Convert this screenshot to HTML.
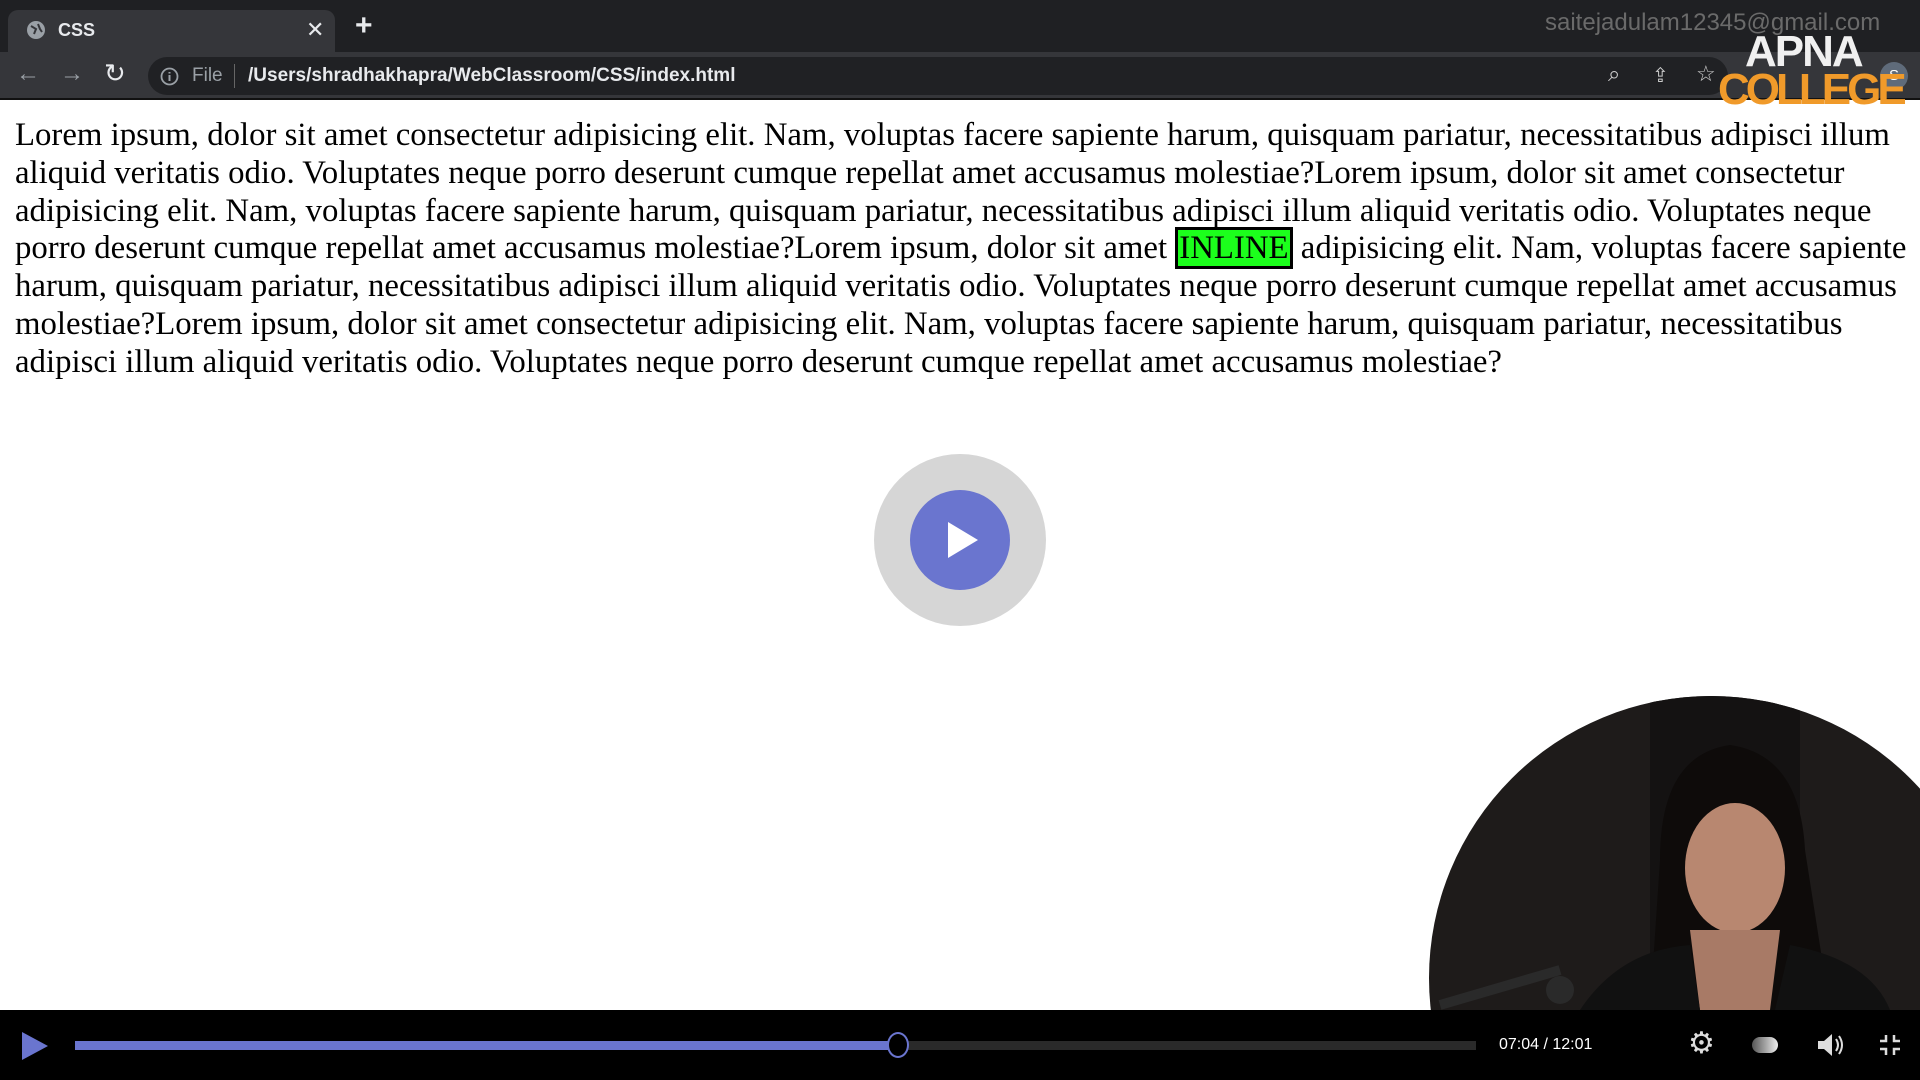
<!DOCTYPE html>
<html><head><style>
*{margin:0;padding:0;box-sizing:border-box}
body{width:1920px;height:1080px;overflow:hidden;background:#fff;position:relative;font-family:"Liberation Sans",sans-serif}
.tabbar{position:absolute;left:0;top:0;width:1920px;height:52px;background:#1f2023}
.tab{position:absolute;left:8px;top:10px;width:327px;height:42px;background:#35363a;border-radius:10px 10px 0 0;color:#e8eaed;font-size:18px}
.toolbar{position:absolute;left:0;top:52px;width:1920px;height:48px;background:#35363a;border-bottom:2px solid #111}
.url{position:absolute;left:148px;top:5px;width:1580px;height:38px;background:#202124;border-radius:19px;color:#e8eaed;font-size:19px}
.text{position:absolute;left:15px;top:117px;font-family:"Liberation Serif",serif;font-size:32.8px;line-height:37.8px;color:#000;white-space:nowrap}
.inl{background:#1cff1c;border:3px solid #000;padding:0 1px}
.ctrl{position:absolute;left:0;top:1010px;width:1920px;height:70px;background:#000}
</style></head><body>
<div class="tabbar">
 <div class="tab">
  <svg style="position:absolute;left:18px;top:10px" width="20" height="20"><circle cx="10" cy="10" r="9" fill="#9aa0a6"/><path d="M5 6 L10 9 L8 14 M12 4 L14 9 L16 12" stroke="#35363a" stroke-width="2" fill="none"/></svg>
  <span style="position:absolute;left:50px;top:10px;font-weight:bold">CSS</span>
  <span style="position:absolute;left:298px;top:7px;font-size:22px">✕</span>
 </div>
 <span style="position:absolute;left:355px;top:8px;color:#e8eaed;font-size:30px;line-height:36px;font-weight:bold">+</span>
 <span style="position:absolute;left:1545px;top:9px;color:#6a6a6a;font-size:24px">saitejadulam12345@gmail.com</span>
</div>
<div class="toolbar">
 <span style="position:absolute;left:16px;top:8px;color:#9aa0a6;font-size:24px">←</span>
 <span style="position:absolute;left:60px;top:8px;color:#9aa0a6;font-size:24px">→</span>
 <span style="position:absolute;left:104px;top:6px;color:#e8eaed;font-size:26px">↻</span>
 <div class="url">
  <svg style="position:absolute;left:12px;top:10px" width="19" height="19"><circle cx="9.5" cy="9.5" r="8" stroke="#9aa0a6" stroke-width="1.8" fill="none"/><path d="M9.5 8v6M9.5 5v1.5" stroke="#9aa0a6" stroke-width="2"/></svg>
  <span style="position:absolute;left:44px;top:8px;color:#9aa0a6">File</span>
  <span style="position:absolute;left:86px;top:7px;width:1px;height:24px;background:#666"></span>
  <span style="position:absolute;left:100px;top:8px;font-weight:bold">/Users/shradhakhapra/WebClassroom/CSS/index.html</span>
  <span style="position:absolute;left:1460px;top:4px;color:#ccc;font-size:22px">⌕</span>
  <span style="position:absolute;left:1504px;top:6px;color:#ccc;font-size:20px">⇪</span>
  <span style="position:absolute;left:1548px;top:4px;color:#ccc;font-size:22px">☆</span>
 </div>
 <div style="position:absolute;left:1880px;top:10px;width:28px;height:28px;border-radius:50%;background:#5f6b7a;color:#fff;font-size:15px;text-align:center;line-height:28px">S</div>
 <div style="position:absolute;left:1745px;top:-20px;font-weight:bold;font-size:44px;line-height:40px;color:#f0f0f0;letter-spacing:-2px">APNA</div>
 <div style="position:absolute;left:1718px;top:18px;font-weight:bold;font-size:44px;line-height:40px;color:#f09a2a;letter-spacing:-4px">COLLEGE</div>
</div>
<div class="text">
Lorem ipsum, dolor sit amet consectetur adipisicing elit. Nam, voluptas facere sapiente harum, quisquam pariatur, necessitatibus adipisci illum<br>
aliquid veritatis odio. Voluptates neque porro deserunt cumque repellat amet accusamus molestiae?Lorem ipsum, dolor sit amet consectetur<br>
adipisicing elit. Nam, voluptas facere sapiente harum, quisquam pariatur, necessitatibus adipisci illum aliquid veritatis odio. Voluptates neque<br>
porro deserunt cumque repellat amet accusamus molestiae?Lorem ipsum, dolor sit amet <span class="inl">INLINE</span> adipisicing elit. Nam, voluptas facere sapiente<br>
harum, quisquam pariatur, necessitatibus adipisci illum aliquid veritatis odio. Voluptates neque porro deserunt cumque repellat amet accusamus<br>
molestiae?Lorem ipsum, dolor sit amet consectetur adipisicing elit. Nam, voluptas facere sapiente harum, quisquam pariatur, necessitatibus<br>
adipisci illum aliquid veritatis odio. Voluptates neque porro deserunt cumque repellat amet accusamus molestiae?
</div>
<svg style="position:absolute;left:874px;top:454px" width="172" height="172"><circle cx="86" cy="86" r="86" fill="#d6d6d6"/><circle cx="86" cy="86" r="50" fill="#6a75cf"/><path d="M74 68 L104 86 L74 104Z" fill="#fff"/></svg>
<svg style="position:absolute;left:0;top:0" width="1920" height="1080">
 <defs><clipPath id="c"><circle cx="1711" cy="978" r="282"/></clipPath></defs>
 <g clip-path="url(#c)">
  <rect x="1420" y="690" width="500" height="330" fill="#1e1b1a"/>
  <rect x="1650" y="690" width="150" height="330" fill="#141212"/>
  <path d="M1650 1010 L1660 860 Q1660 755 1730 745 Q1800 755 1805 850 L1830 1010Z" fill="#0e0b0a"/>
  <ellipse cx="1735" cy="868" rx="50" ry="65" fill="#b88770"/>
  <path d="M1690 930 L1780 930 L1770 1010 L1700 1010Z" fill="#a87a66"/>
  <path d="M1580 1010 Q1620 950 1690 945 L1700 1010Z M1790 945 Q1870 960 1890 1010 L1775 1010Z" fill="#111"/>
  <path d="M1440 1005 L1560 970" stroke="#2a2a2a" stroke-width="10"/>
  <circle cx="1560" cy="990" r="14" fill="#2a2a2a"/>
 </g>
</svg>
<div class="ctrl">
 <svg style="position:absolute;left:20px;top:20px" width="30" height="32"><path d="M2 2 L28 16 L2 30Z" fill="#6a75cf"/></svg>
 <div style="position:absolute;left:75px;top:31px;width:1401px;height:9px;background:#2a2a2a"></div>
 <div style="position:absolute;left:75px;top:31px;width:823px;height:9px;background:#6a75cf"></div>
 <div style="position:absolute;left:887px;top:22px;width:22px;height:26px;border-radius:50%;background:#000;border:2px solid #6a75cf"></div>
 <span style="position:absolute;left:1499px;top:26px;color:#fff;font-size:16px">07:04 / 12:01</span>
 <span style="position:absolute;left:1688px;top:16px;color:#ddd;font-size:30px">⚙</span>
 <div style="position:absolute;left:1752px;top:27px;width:26px;height:16px;border-radius:8px;background:linear-gradient(90deg,#555,#eee)"></div>
 <svg style="position:absolute;left:1816px;top:22px" width="28" height="26"><path d="M2 9h6l8-7v22l-8-7H2Z" fill="#ddd"/><path d="M20 7q4 6 0 12M23 4q6 9 0 18" stroke="#ddd" stroke-width="2" fill="none"/></svg>
 <svg style="position:absolute;left:1878px;top:23px" width="24" height="24"><path d="M8 2v6H2M16 2v6h6M8 22v-6H2M16 22v-6h6" stroke="#ddd" stroke-width="2.5" fill="none"/></svg>
</div>
</body></html>
